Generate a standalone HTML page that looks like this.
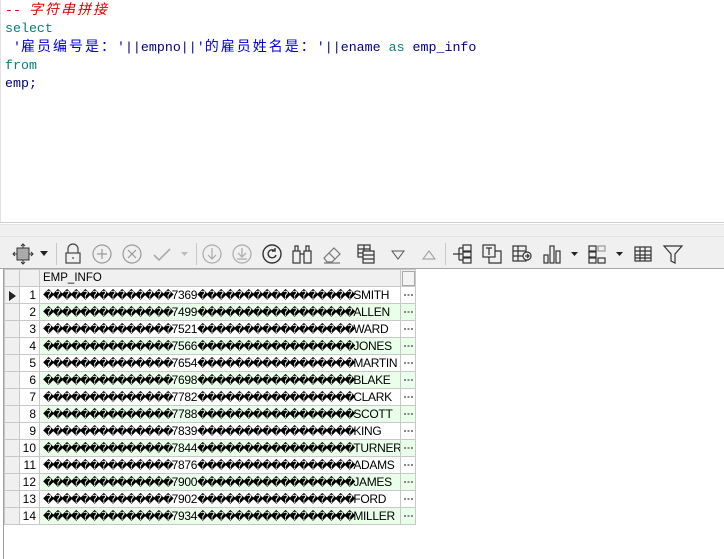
<!DOCTYPE html>
<html><head><meta charset="utf-8"><style>
*{margin:0;padding:0;box-sizing:border-box}
body{width:724px;height:559px;overflow:hidden;background:#fff;position:relative;font-family:"Liberation Sans",sans-serif}
#ed{position:absolute;left:0;top:0;width:724px;height:223px;border-bottom:1px solid #d0d0d0;border-left:1px solid #e0e0e0;font-family:"Liberation Mono",monospace;font-size:13.3px;line-height:18px;padding:1px 0 0 4px;white-space:pre;color:#000080}
.z{font-family:"Noto Sans CJK SC",sans-serif;font-size:14px;display:inline-block;width:16px;line-height:16px}
.c{color:#e00000;font-style:italic}
.k{color:#008080}.s{color:#0000e0}
#band{position:absolute;left:0;top:224px;width:724px;height:45px;background:#f0f0f0;border-top:1px solid #e4e4e4}
#tb{position:absolute;left:0;top:236px;width:724px;height:33px;border-top:1px solid #e0e0e0;border-bottom:1px solid #a8a8a8;background:#f0f0f0}
.ic{position:absolute;top:6px}
.sep{position:absolute;top:6px;width:1px;height:22px;background:#c8c8c8}
#lb{position:absolute;left:3px;top:269px;width:1px;height:290px;background:#a0a0a0}
table{position:absolute;left:4px;top:269px;border-collapse:collapse;font-size:12px;color:#000;table-layout:fixed;width:411px}
td{border:1px solid #c8c8c8;height:17px;padding:0;white-space:nowrap;line-height:15px;overflow:hidden}
.ind{width:15px;background:#f0f0f0}
.num{width:20px;text-align:right;padding-right:3px;background:#fff}
.dat{width:361px;padding-left:3px;letter-spacing:-0.3px}
.el{width:15px;text-align:center}
tr.g td.dat,tr.g td.el{background:#eaffea}
tr.h td{background:#f0f0f0}
.d{display:inline-block;width:9.2px;font-family:"DejaVu Sans",sans-serif;font-size:11px;letter-spacing:0;text-align:left}
</style></head><body>
<div id="ed"><span class="c">-- <span class="z">字</span><span class="z">符</span><span class="z">串</span><span class="z">拼</span><span class="z">接</span></span>
<span class="k">select</span>
 <span class="s">'<span class="z">雇</span><span class="z">员</span><span class="z">编</span><span class="z">号</span><span class="z">是</span><span class="z">：</span>'</span>||empno||<span class="s">'<span class="z">的</span><span class="z">雇</span><span class="z">员</span><span class="z">姓</span><span class="z">名</span><span class="z">是</span><span class="z">：</span>'</span>||ename <span class="k">as</span> emp_info
<span class="k">from</span>
emp;</div>
<div id="band"></div>
<div id="tb">
<svg class="ic" style="left:12px" width="22" height="22" viewBox="0 0 22 22" fill="none" stroke="#333"><rect x="5" y="5" width="12" height="12" fill="#aaa"/><path d="M11 1v4M11 17v4M1 11h4M17 11h4M9 3l2-2 2 2M9 19l2 2 2-2M3 9l-2 2 2 2M19 9l2 2-2 2"/></svg>
<svg class="ic" style="left:40px;top:14px" width="8" height="5"><path d="M0 0h8L4 5z" fill="#222"/></svg>
<div class="sep" style="left:56px"></div>
<svg class="ic" style="left:63px" width="20" height="22" fill="none" stroke="#444" stroke-width="1.2"><path d="M5 10V6a5 5 0 0110 0v4"/><rect x="3" y="10" width="14" height="10"/><path d="M10 14v2"/></svg>
<svg class="ic" style="left:91px" width="22" height="22" fill="none" stroke="#999" stroke-width="1.2"><circle cx="11" cy="11" r="9"/><path d="M11 6v10M6 11h10"/></svg>
<svg class="ic" style="left:121px" width="22" height="22" fill="none" stroke="#999" stroke-width="1.2"><circle cx="11" cy="11" r="9"/><path d="M7 7l8 8M15 7l-8 8"/></svg>
<svg class="ic" style="left:152px" width="20" height="22" fill="none" stroke="#aaa" stroke-width="1.6"><path d="M2 12l5 5 11-11"/></svg>
<svg class="ic" style="left:181px;top:15px" width="7" height="4"><path d="M0 0h7L3.5 4z" fill="#bbb"/></svg>
<div class="sep" style="left:196px"></div>
<svg class="ic" style="left:201px" width="22" height="22" fill="none" stroke="#aaa" stroke-width="1.2"><circle cx="11" cy="11" r="9"/><path d="M11 5v11M7 12l4 4 4-4"/></svg>
<svg class="ic" style="left:231px" width="22" height="22" fill="none" stroke="#aaa" stroke-width="1.2"><circle cx="11" cy="11" r="9"/><path d="M11 5v9M7 10l4 4 4-4M6 16h10"/></svg>
<svg class="ic" style="left:261px" width="22" height="22" fill="none" stroke="#333" stroke-width="1.4"><circle cx="11" cy="11" r="9"/><path d="M14 8a4 4 0 10 1 4"/><path d="M14 5v3h-3"/></svg>
<svg class="ic" style="left:291px" width="22" height="22" fill="none" stroke="#333" stroke-width="1.2"><rect x="2" y="8" width="7" height="12"/><rect x="13" y="8" width="7" height="12"/><path d="M4 8V3h3v5M15 8V3h3v5M9 11h4"/></svg>
<svg class="ic" style="left:321px" width="22" height="22" fill="none" stroke="#777" stroke-width="1.2"><path d="M3 15l10-10 6 6-8 8H6z M8 10l6 6M3 20h16"/></svg>
<svg class="ic" style="left:355px" width="22" height="22" fill="none" stroke="#333" stroke-width="1.2"><rect x="3" y="2" width="12" height="12"/><path d="M3 6h12M3 10h12M9 2v12"/><rect x="8" y="8" width="11" height="12" fill="#f0f0f0"/><path d="M8 12h11M8 16h11"/></svg>
<svg class="ic" style="left:390px" width="16" height="22" fill="none" stroke="#555"><path d="M2 8h12l-6 8z"/></svg>
<svg class="ic" style="left:421px" width="16" height="22" fill="none" stroke="#999"><path d="M2 16h12L8 8z"/></svg>
<div class="sep" style="left:445px"></div>
<svg class="ic" style="left:451px" width="22" height="22" fill="none" stroke="#333" stroke-width="1.2"><path d="M2 11h6M8 5v12M8 5h4M8 11h4M8 17h4"/><rect x="12" y="2" width="8" height="6"/><rect x="12" y="9" width="8" height="5"/><rect x="12" y="15" width="8" height="5"/></svg>
<svg class="ic" style="left:481px" width="22" height="22" fill="none" stroke="#333" stroke-width="1.2"><rect x="2" y="2" width="12" height="12"/><path d="M5 5h6M8 5v7"/><path d="M8 14v6h12V8h-6"/></svg>
<svg class="ic" style="left:511px" width="22" height="22" fill="none" stroke="#333" stroke-width="1.2"><rect x="2" y="3" width="13" height="15"/><path d="M2 8h13M2 13h13M7 3v15"/><circle cx="16" cy="13" r="4" fill="#f0f0f0"/><path d="M14 13h4M16 11l2 2-2 2"/></svg>
<svg class="ic" style="left:542px" width="22" height="22" fill="none" stroke="#333" stroke-width="1.2"><rect x="2" y="12" width="4" height="8"/><rect x="8" y="3" width="4" height="17"/><rect x="14" y="8" width="4" height="12"/></svg>
<svg class="ic" style="left:571px;top:15px" width="7" height="4"><path d="M0 0h7L3.5 4z" fill="#222"/></svg>
<svg class="ic" style="left:587px" width="22" height="22" fill="none" stroke="#333" stroke-width="1.2"><rect x="2" y="3" width="7" height="5"/><rect x="11" y="3" width="7" height="5" stroke="#999"/><rect x="2" y="9" width="7" height="5"/><rect x="2" y="15" width="7" height="5"/><rect x="11" y="15" width="7" height="5"/></svg>
<svg class="ic" style="left:616px;top:15px" width="7" height="4"><path d="M0 0h7L3.5 4z" fill="#222"/></svg>
<svg class="ic" style="left:632px" width="22" height="22" fill="none" stroke="#333" stroke-width="1.2"><rect x="3" y="4" width="16" height="14"/><path d="M3 8h16M3 12h16M3 15h16M8 4v14M13 4v14"/></svg>
<svg class="ic" style="left:662px" width="22" height="22" fill="none" stroke="#333" stroke-width="1.2"><path d="M2 3h18l-7 8v9l-4-2v-7z"/></svg>
</div>
<div id="lb"></div>
<table id="g"><colgroup><col style="width:15px"><col style="width:20px"><col style="width:361px"><col style="width:15px"></colgroup><tr class="h"><td class="ind"></td><td class="num"></td><td class="dat" style="letter-spacing:0;font-size:11.5px">EMP_INFO</td><td class="el"><div style="width:13px;height:15px;border:1px solid #aaa;margin:0 auto;background:#f4f4f4"></div></td></tr></table>
<script>
var d=[["7369","SMITH"],["7499","ALLEN"],["7521","WARD"],["7566","JONES"],["7654","MARTIN"],["7698","BLAKE"],["7782","CLARK"],["7788","SCOTT"],["7839","KING"],["7844","TURNER"],["7876","ADAMS"],["7900","JAMES"],["7902","FORD"],["7934","MILLER"]];
function dd(n){var s="";for(var i=0;i<n;i++)s+='<span class="d">\uFFFD</span>';return s}
var dots='<svg width="9" height="4" style="display:block;margin:0 auto"><rect x="0" y="1" width="2" height="2" fill="#888"/><rect x="3.5" y="1" width="2" height="2" fill="#888"/><rect x="7" y="1" width="2" height="2" fill="#888"/></svg>';
var h="";d.forEach(function(r,i){h+='<tr class="'+(i%2?'g':'')+'"><td class="ind">'+(i==0?'<svg width="15" height="13" style="display:block"><path d="M4 2l7 5-7 5z" fill="#222"/></svg>':'')+'</td><td class="num">'+(i+1)+'</td><td class="dat">'+dd(14)+r[0]+dd(17)+r[1]+'</td><td class="el">'+dots+'</td></tr>'});
document.getElementById("g").insertAdjacentHTML("beforeend",h);
</script>
</body></html>
